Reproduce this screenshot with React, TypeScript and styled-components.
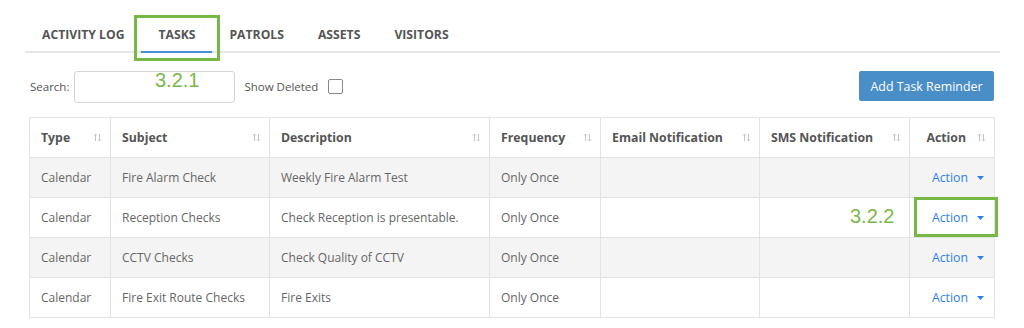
import React from 'react';
import styled, { createGlobalStyle } from 'styled-components';

interface Task {
  type: string;
  subject: string;
  description: string;
  frequency: string;
  email: string;
  sms: string;
}

const GlobalStyle = createGlobalStyle`
  body {
    margin: 0;
    background: #fff;
    font-family: "Open Sans", "Liberation Sans", sans-serif;
  }
`;

const Page = styled.div`
  position: relative;
  width: 975px;
  margin-left: 25px;
`;

const Tabs = styled.div`
  display: flex;
  padding-top: 18px;
  padding-left: 0;
  border-bottom: 2px solid #e6e6e6;
`;

const Tab = styled.div<{ $active?: boolean }>`
  height: 33px;
  line-height: 33px;
  padding: 0 17px;
  margin-bottom: -2px;
  font-size: 12.2px;
  font-weight: 700;
  color: #555;
  text-transform: uppercase;
  border-bottom: 2px solid ${(p) => (p.$active ? '#4a8fd3' : 'transparent')};
`;

const Content = styled.div`
  padding: 0 6px 0 4px;
`;

const Toolbar = styled.div`
  display: flex;
  align-items: center;
  justify-content: space-between;
  margin-top: 18px;
  height: 32px;
`;

const Filters = styled.div`
  display: flex;
  align-items: center;
`;

const Label = styled.span<{ $gap: number }>`
  font-size: 11.5px;
  color: #555;
  margin: -2px ${(p) => p.$gap}px 0 1px;
`;

const SearchInput = styled.div`
  box-sizing: border-box;
  width: 161px;
  height: 32px;
  border: 1px solid #d4d4d4;
  border-radius: 3px;
  margin-right: 8px;
`;

const Checkbox = styled.span`
  box-sizing: border-box;
  width: 15px;
  height: 15px;
  border: 1px solid #888;
  border-radius: 2px;
  margin-top: -2px;
`;

const PrimaryButton = styled.button`
  height: 30px;
  width: 135px;
  padding: 0;
  border: none;
  border-radius: 2px;
  background: #4a8ec8;
  color: #fff;
  font-family: "Open Sans", "Liberation Sans", sans-serif;
  font-size: 12.4px;
  margin-top: -2px;
`;

const Table = styled.table`
  margin-top: 14px;
  border-collapse: collapse;
  width: 965px;
  table-layout: fixed;
  font-size: 12px;
  color: #666;
  border: 1px solid #e3e3e3;
`;

const Th = styled.th<{ $w: number }>`
  box-sizing: border-box;
  width: ${(p) => p.$w}px;
  height: 40px;
  padding: 0 8px 0 11px;
  border: 1px solid #e3e3e3;
  text-align: left;
  font-weight: 700;
  color: #555;
  font-size: 12.3px;
  white-space: nowrap;
`;

const HeadInner = styled.div<{ $right?: boolean }>`
  display: flex;
  align-items: center;
  justify-content: ${(p) => (p.$right ? 'flex-end' : 'space-between')};
  gap: 11px;
`;

const Row = styled.tr<{ $striped?: boolean }>`
  background: ${(p) => (p.$striped ? '#f4f4f4' : '#fff')};
`;

const Td = styled.td<{ $right?: boolean }>`
  box-sizing: border-box;
  height: 40px;
  padding: 0 10px 0 11px;
  border: 1px solid #e3e3e3;
  text-align: ${(p) => (p.$right ? 'right' : 'left')};
  white-space: nowrap;
`;

const ActionLink = styled.span`
  display: inline-flex;
  align-items: center;
  gap: 9px;
  font-size: 12.3px;
  color: #2f7fe8;
`;

const Annotation = styled.span<{ $x: number; $y: number }>`
  position: absolute;
  left: ${(p) => p.$x}px;
  top: ${(p) => p.$y}px;
  font-family: "Liberation Sans", Arial, sans-serif;
  font-size: 20px;
  color: #7ab84a;
  line-height: 1;
`;

const HighlightBox = styled.div<{ $x: number; $y: number; $w: number; $h: number }>`
  position: absolute;
  box-sizing: border-box;
  left: ${(p) => p.$x}px;
  top: ${(p) => p.$y}px;
  width: ${(p) => p.$w}px;
  height: ${(p) => p.$h}px;
  border: 3px solid #76b843;
`;

const SortIcon: React.FC = () => (
  <svg width="9" height="9" viewBox="0 0 9 9" fill="none" stroke="#c4c4c4" strokeWidth="1">
    <path d="M2.5 8V1M1 2.5L2.5 1L4 2.5" />
    <path d="M6.5 1V8M5 6.5L6.5 8L8 6.5" />
  </svg>
);

const Caret: React.FC = () => (
  <svg width="7" height="4" viewBox="0 0 7 4">
    <path d="M0 0H7L3.5 4Z" fill="#2f7fe8" />
  </svg>
);

const columns = [
  { title: 'Type', width: 81 },
  { title: 'Subject', width: 159 },
  { title: 'Description', width: 220 },
  { title: 'Frequency', width: 111 },
  { title: 'Email Notification', width: 159 },
  { title: 'SMS Notification', width: 150 },
  { title: 'Action', width: 85 },
];

const tasks: Task[] = [
  { type: 'Calendar', subject: 'Fire Alarm Check', description: 'Weekly Fire Alarm Test', frequency: 'Only Once', email: '', sms: '' },
  { type: 'Calendar', subject: 'Reception Checks', description: 'Check Reception is presentable.', frequency: 'Only Once', email: '', sms: '' },
  { type: 'Calendar', subject: 'CCTV Checks', description: 'Check Quality of CCTV', frequency: 'Only Once', email: '', sms: '' },
  { type: 'Calendar', subject: 'Fire Exit Route Checks', description: 'Fire Exits', frequency: 'Only Once', email: '', sms: '' },
];

const tabs = ['Activity Log', 'Tasks', 'Patrols', 'Assets', 'Visitors'];

const App: React.FC = () => {
  return (
    <Page>
      <GlobalStyle />
      <Tabs>
        {tabs.map((t) => (
          <Tab key={t} $active={t === 'Tasks'}>
            {t}
          </Tab>
        ))}
      </Tabs>
      <Content>
        <Toolbar>
          <Filters>
            <Label $gap={5}>Search:</Label>
            <SearchInput />
            <Label $gap={10}>Show Deleted</Label>
            <Checkbox />
          </Filters>
          <PrimaryButton>Add Task Reminder</PrimaryButton>
        </Toolbar>
        <Table>
          <thead>
            <tr>
              {columns.map((c) => (
                <Th key={c.title} $w={c.width}>
                  <HeadInner $right={c.title === 'Action'}>
                    <span>{c.title}</span>
                    <SortIcon />
                  </HeadInner>
                </Th>
              ))}
            </tr>
          </thead>
          <tbody>
            {tasks.map((task, index) => (
              <Row key={index} $striped={index % 2 === 0}>
                <Td>{task.type}</Td>
                <Td>{task.subject}</Td>
                <Td>{task.description}</Td>
                <Td>{task.frequency}</Td>
                <Td>{task.email}</Td>
                <Td>{task.sms}</Td>
                <Td $right>
                  <ActionLink>
                    Action <Caret />
                  </ActionLink>
                </Td>
              </Row>
            ))}
          </tbody>
        </Table>
      </Content>
      <HighlightBox $x={109} $y={15} $w={86} $h={46} />
      <Annotation $x={130} $y={70}>3.2.1</Annotation>
      <HighlightBox $x={889} $y={197} $w={84} $h={40} />
      <Annotation $x={825} $y={206}>3.2.2</Annotation>
    </Page>
  );
};

export default App;
